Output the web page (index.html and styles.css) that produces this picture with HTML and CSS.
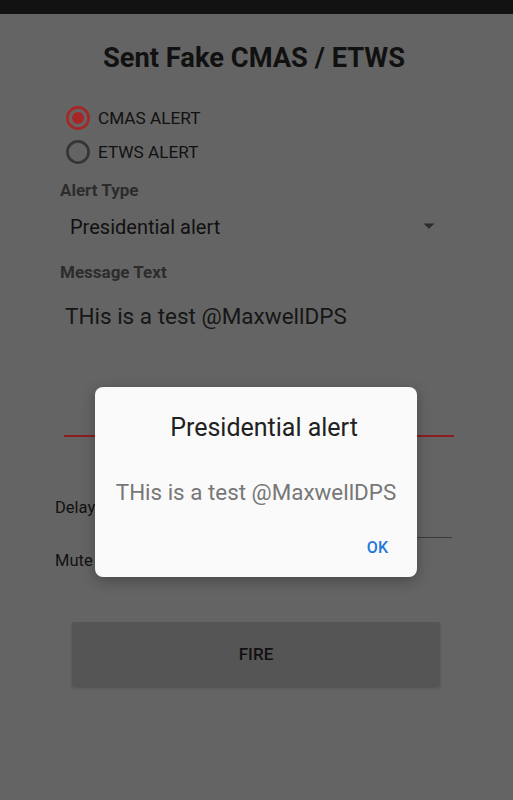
FILE: index.html
```html
<!DOCTYPE html>
<html lang="en">
<head>
<meta charset="utf-8">
<title>Sent Fake CMAS / ETWS</title>
<link rel="stylesheet" href="styles.css">
</head>
<body>
<div class="statusbar"></div>
<main class="screen">
  <h1 class="title">Sent Fake CMAS / ETWS</h1>
  <div class="radios">
    <div class="radio-row">
      <svg class="radio" viewBox="0 0 24 24" width="24" height="24"><circle cx="12" cy="12" r="10.6" fill="none" stroke="#a82626" stroke-width="2.6"/><circle cx="12" cy="12" r="6" fill="#a82626"/></svg>
      <span>CMAS ALERT</span>
    </div>
    <div class="radio-row">
      <svg class="radio" viewBox="0 0 24 24" width="24" height="24"><circle cx="12" cy="12" r="10.6" fill="none" stroke="#353535" stroke-width="2.6"/></svg>
      <span>ETWS ALERT</span>
    </div>
  </div>
  <div class="field-label">Alert Type</div>
  <div class="spinner">
    <span>Presidential alert</span>
    <svg class="caret" viewBox="0 0 12 6" width="12" height="6"><path d="M0.5 0.5 L11.5 0.5 L6 5.8 Z" fill="#2c2c2c"/></svg>
  </div>
  <div class="field-label label-message">Message Text</div>
  <div class="message-edit">THis is a test @MaxwellDPS</div>
  <div class="delay-row">
    <span class="row-label">Delay</span>
    <div class="delay-input"></div>
  </div>
  <div class="mute-row">Mute</div>
  <button class="fire">FIRE</button>
</main>
<div class="dialog">
  <div class="dialog-title">Presidential alert</div>
  <div class="dialog-message">THis is a test @MaxwellDPS</div>
  <div class="dialog-actions"><span class="dialog-ok">OK</span></div>
</div>
</body>
</html>
```
FILE: styles.css
```css
html, body {
  margin: 0;
  padding: 0;
}
body {
  width: 513px;
  height: 800px;
  overflow: hidden;
  background: #646464;
  font-family: Roboto, "Liberation Sans", sans-serif;
  color: #111;
}
.statusbar {
  height: 14px;
  background: #121212;
}
.screen {
  display: flex;
  flex-direction: column;
}
.title {
  margin: 28px 5px 0 0;
  font-size: 27.3px;
  line-height: 32px;
  font-weight: 700;
  text-align: center;
  color: #111;
}
.radios {
  margin: 27px 0 0 66px;
  display: flex;
  flex-direction: column;
}
.radio-row {
  height: 34px;
  display: flex;
  align-items: center;
  gap: 8px;
  font-size: 17.2px;
  line-height: 34px;
  color: #111;
}
.radio {
  display: block;
  flex: none;
}
.field-label {
  margin: 11px 0 0 60px;
  font-size: 17px;
  line-height: 20px;
  font-weight: 700;
  color: #2c2c2c;
}
.spinner {
  margin: 13px 59px 0 60px;
  padding: 0 19px 0 10px;
  display: flex;
  align-items: center;
  justify-content: space-between;
  font-size: 20px;
  line-height: 28px;
  color: #111;
}
.caret {
  display: block;
  margin-top: -3px;
}
.label-message {
  margin-top: 21px;
}
.message-edit {
  margin: 19px 59px 0 64px;
  padding-left: 1px;
  height: 134px;
  font-size: 22.5px;
  line-height: 30px;
  color: #161616;
  border-bottom: 2px solid #8a1d1d;
}
.delay-row {
  margin: 53px 61px 0 55px;
  height: 48px;
  display: flex;
  align-items: flex-start;
  gap: 12px;
}
.row-label {
  margin-top: 8px;
  font-size: 16.5px;
  line-height: 20px;
  color: #111;
}
.delay-input {
  flex: 1;
  margin-left: 120px;
  height: 47px;
  border-bottom: 1px solid #3a3a3a;
}
.mute-row {
  margin: 13px 0 0 55px;
  font-size: 16.5px;
  line-height: 20px;
  color: #111;
}
.fire {
  margin: 51px 0 0 72px;
  width: 368px;
  height: 64px;
  border: none;
  border-radius: 2px;
  background: #555555;
  box-shadow: 0 2px 3px rgba(0, 0, 0, 0.18);
  font-family: Roboto, "Liberation Sans", sans-serif;
  font-size: 17px;
  font-weight: 500;
  color: #111;
  padding: 0;
}
.dialog {
  position: absolute;
  left: 95px;
  top: 387px;
  width: 322px;
  height: 190px;
  box-sizing: border-box;
  background: #fafafa;
  border-radius: 8px;
  box-shadow: 0 4px 14px rgba(0, 0, 0, 0.28);
  display: flex;
  flex-direction: column;
}
.dialog-title {
  margin-top: 25px;
  padding-left: 16px;
  text-align: center;
  font-size: 25px;
  line-height: 32px;
  color: #212121;
}
.dialog-message {
  margin-top: 33px;
  text-align: center;
  font-size: 22.4px;
  line-height: 30px;
  color: #777;
}
.dialog-actions {
  margin-top: 31px;
  padding-right: 29px;
  display: flex;
  justify-content: flex-end;
}
.dialog-ok {
  font-size: 16px;
  line-height: 20px;
  font-weight: 500;
  color: #1e78dc;
}
```
